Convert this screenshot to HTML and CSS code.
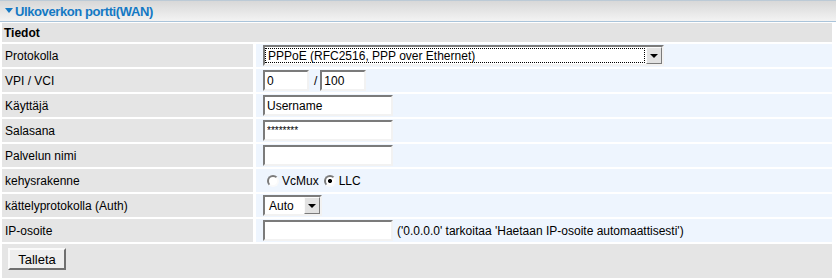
FILE: index.html
```html
<!DOCTYPE html>
<html lang="fi">
<head>
    <meta charset="UTF-8">
    <title>Ulkoverkon portti(WAN)</title>
    <link rel="stylesheet" href="styles.css">
</head>
<body>
    <div class="panel">
        <!-- otsikko -->
        <div class="panel-head">
            <span class="caret"></span>
            <span class="panel-title">Ulkoverkon portti(WAN)</span>
        </div>

        <div class="form-grid">
            <div class="section">Tiedot</div>

            <div class="label">Protokolla</div>
            <div class="value">
                <div class="select select-wide">
                    <span class="select-text focused">PPPoE (RFC2516, PPP over Ethernet)</span>
                    <span class="select-btn"><span class="arrow"></span></span>
                </div>
            </div>

            <div class="label">VPI / VCI</div>
            <div class="value">
                <input class="field field-short" type="text" value="0">
                <span class="slash">/</span>
                <input class="field field-short" type="text" value="100">
            </div>

            <div class="label">Käyttäjä</div>
            <div class="value">
                <input class="field" type="text" value="Username">
            </div>

            <div class="label">Salasana</div>
            <div class="value">
                <input class="field field-pass" type="text" value="********">
            </div>

            <div class="label">Palvelun nimi</div>
            <div class="value">
                <input class="field" type="text" value="">
            </div>

            <div class="label">kehysrakenne</div>
            <div class="value">
                <label class="radio-item"><input class="radio" type="radio" name="encap"> VcMux</label>
                <label class="radio-item"><input class="radio" type="radio" name="encap" checked> LLC</label>
            </div>

            <div class="label">kättelyprotokolla (Auth)</div>
            <div class="value">
                <div class="select select-small">
                    <span class="select-text">Auto</span>
                    <span class="select-btn"><span class="arrow"></span></span>
                </div>
            </div>

            <div class="label">IP-osoite</div>
            <div class="value">
                <input class="field" type="text" value="">
                <span class="hint">('0.0.0.0' tarkoitaa 'Haetaan IP-osoite automaattisesti')</span>
            </div>
        </div>

        <div class="actions">
            <button class="button" type="button">Talleta</button>
        </div>
    </div>
</body>
</html>
```

FILE: styles.css
```css
body {
    margin: 0;
    padding: 0;
    background-color: #fff;
    font-family: 'Liberation Sans', Arial, sans-serif;
    font-size: 12px;
    color: #000;
}

.panel {
    width: 836px;
}

.panel-head {
    height: 20px;
    border-top: 1px solid #bccad6;
    border-bottom: 1px solid #aac4da;
    background: linear-gradient(#d8d8d8, #f3f3f3);
    display: flex;
    align-items: center;
    padding-left: 5px;
    box-sizing: content-box;
}

.caret {
    width: 0;
    height: 0;
    border-left: 4px solid transparent;
    border-right: 4px solid transparent;
    border-top: 5px solid #1479c4;
    margin-right: 2px;
    margin-top: -2px;
}

.panel-title {
    font-size: 13px;
    font-weight: bold;
    color: #1479c4;
    letter-spacing: -0.4px;
}

.form-grid {
    display: grid;
    grid-template-columns: 251px 576px;
    grid-template-rows: 19px;
    grid-auto-rows: 23px;
    column-gap: 3px;
    row-gap: 2px;
    padding: 1px 4px 0 2px;
}

.section {
    grid-column: 1 / 3;
    background-color: #e3e3e3;
    font-weight: bold;
    display: flex;
    align-items: center;
    padding-left: 2px;
}

.label {
    background-color: #e5e5e5;
    display: flex;
    align-items: center;
    padding-left: 3px;
}

.value {
    background-color: #eef5fe;
    display: flex;
    align-items: center;
    padding-left: 7px;
}

.field {
    box-sizing: border-box;
    width: 130px;
    height: 21px;
    margin: 0;
    padding: 0 2px;
    border: 2px solid;
    border-color: #7b7b7b #f2f2f2 #f2f2f2 #7b7b7b;
    background-color: #fff;
    font-family: 'Liberation Sans', Arial, sans-serif;
    font-size: 12px;
    color: #000;
    outline: none;
}

.field-short {
    width: 46px;
}

.field-pass {
    font-size: 10px;
}

.slash {
    margin: 0 3px 0 5px;
}

.hint {
    margin-left: 4px;
}

.select {
    box-sizing: border-box;
    display: inline-flex;
    height: 21px;
    border: 2px solid;
    border-color: #7b7b7b #f2f2f2 #f2f2f2 #7b7b7b;
    background-color: #fff;
}

.select-wide {
    width: 401px;
}

.select-small {
    width: 59px;
}

.select-text {
    flex: 1;
    display: flex;
    align-items: center;
    padding-left: 3px;
    margin: 1px 1px 1px 0;
    border: 1px solid transparent;
}

.select-text.focused {
    border: 1px dotted #000;
    padding-left: 2px;
}

.select-btn {
    box-sizing: border-box;
    width: 16px;
    background-color: #e2e2e2;
    border: 1px solid;
    border-color: #fafafa #7b7b7b #7b7b7b #fafafa;
    display: flex;
    align-items: center;
    justify-content: center;
}

.arrow {
    width: 0;
    height: 0;
    border-left: 4px solid transparent;
    border-right: 4px solid transparent;
    border-top: 4px solid #000;
}

.radio-item {
    display: inline-flex;
    align-items: center;
    margin-left: 4px;
    margin-right: 1px;
}

.radio {
    appearance: none;
    -webkit-appearance: none;
    box-sizing: border-box;
    width: 12px;
    height: 12px;
    margin: 0 3px 0 0;
    border-radius: 50%;
    border: 2px solid;
    border-color: #7b7b7b #fafafa #fafafa #7b7b7b;
    background-color: #fff;
}

.radio:checked {
    background: radial-gradient(circle, #000 0 1.8px, #fff 2.3px);
}

.actions {
    margin: 2px 4px 0 2px;
    height: 40px;
    background-color: #e5e5e5;
    padding: 4px 0 0 6px;
    box-sizing: border-box;
}

.button {
    width: 58px;
    height: 22px;
    padding: 0;
    border: 2px solid;
    border-color: #fafafa #6f6f6f #6f6f6f #fafafa;
    background-color: #eeeeee;
    font-family: 'Liberation Sans', Arial, sans-serif;
    font-size: 13px;
    color: #000;
}
```
